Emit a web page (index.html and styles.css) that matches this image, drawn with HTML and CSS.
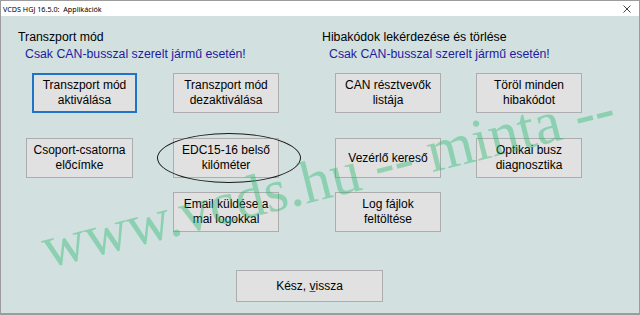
FILE: index.html
```html
<!DOCTYPE html>
<html lang="hu">
<head>
    <meta charset="UTF-8">
    <meta name="viewport" content="width=device-width, initial-scale=1.0">
    <title>VCDS HGJ 16.5.0: Applikációk</title>
    <link rel="stylesheet" href="styles.css">
</head>
<body>
    <div class="window">
        <div class="titlebar">
            <span class="title">VCDS HGJ 16.5.0:&nbsp; Applikációk</span>
            <svg class="close" width="8" height="8" viewBox="0 0 8 8">
                <path d="M0.5 0.5 L7.5 7.5 M7.5 0.5 L0.5 7.5" stroke="#444" stroke-width="1" fill="none"/>
            </svg>
        </div>

        <div class="client">
            <div class="headers">
                <div class="group">
                    <div class="heading">Transzport mód</div>
                    <div class="note">Csak CAN-busszal szerelt jármű esetén!</div>
                </div>
                <div class="group">
                    <div class="heading">Hibakódok lekérdezése és törlése</div>
                    <div class="note">Csak CAN-busszal szerelt jármű esetén!</div>
                </div>
            </div>

            <div class="grid">
                <button class="btn first-row focused c1">Transzport mód<br>aktiválása</button>
                <button class="btn first-row c2">Transzport mód<br>dezaktiválása</button>
                <button class="btn first-row c3">CAN résztvevők<br>listája</button>
                <button class="btn first-row c4">Töröl minden<br>hibakódot</button>

                <button class="btn wide c1">Csoport-csatorna<br>előcímke</button>
                <div class="marked c2">
                    <button class="btn">EDC15-16 belső<br>kilóméter</button>
                    <div class="ring"></div>
                </div>
                <button class="btn c3">Vezérlő kereső</button>
                <button class="btn c4">Optikai busz<br>diagnosztika</button>

                <button class="btn c2">Email küldése a<br>mai logokkal</button>
                <button class="btn c3">Log fájlok<br>feltöltése</button>
            </div>

            <div class="footer">
                <button class="btn done">Kész, <u>v</u>issza</button>
            </div>

            <div class="watermark">www.vcds.hu -- minta --</div>
        </div>
    </div>
</body>
</html>
```

FILE: styles.css
```css
body {
    margin: 0;
    padding: 0;
    font-family: "Liberation Sans", Arial, sans-serif;
    background-color: #ffffff;
}

.window {
    width: 640px;
    height: 315px;
    box-sizing: border-box;
    border: 1px solid #9c9c9c;
    border-bottom-width: 2px;
    background-color: #d2e0e0;
    overflow: hidden;
    display: flex;
    flex-direction: column;
}

.titlebar {
    height: 15px;
    background-color: #ffffff;
    display: flex;
    align-items: center;
    justify-content: space-between;
    padding: 0 8px 0 2px;
}

.title {
    font-family: "Noto Sans", sans-serif;
    font-size: 7.2px;
    color: #000;
}

.close {
    display: block;
}

.client {
    position: relative;
    flex: 1;
}

.headers {
    display: grid;
    grid-template-columns: 304px 1fr;
    padding: 14px 0 0 17px;
}

.heading {
    font-size: 12.3px;
    line-height: 15px;
    color: #000;
}

.note {
    font-size: 12.3px;
    line-height: 15px;
    color: #1c1ca0;
    margin-top: 2px;
    padding-left: 7px;
}

.grid {
    display: grid;
    grid-template-columns: 111px 142px 162px 141px;
    justify-items: end;
    row-gap: 14px;
    padding-left: 25px;
    margin-top: 11px;
}

.c1 { grid-column: 1; }
.c2 { grid-column: 2; }
.c3 { grid-column: 3; }
.c4 { grid-column: 4; }

.btn {
    width: 106px;
    height: 40px;
    padding: 0;
    background-color: #e1e1e1;
    border: 1px solid #adadad;
    font-family: "Liberation Sans", Arial, sans-serif;
    font-size: 12px;
    line-height: 15px;
    color: #000;
    cursor: pointer;
}

.first-row {
    margin-bottom: 11px;
}

.focused {
    border: 2px solid #1f74c8;
    width: 105px;
}

.wide {
    justify-self: start;
    width: 107px;
}

.marked {
    position: relative;
}

.marked .btn {
    display: block;
}

.ring {
    position: absolute;
    left: -16px;
    top: -5px;
    width: 144px;
    height: 50px;
    box-sizing: border-box;
    border: 1.5px solid #1a1a1a;
    border-radius: 50%;
    pointer-events: none;
}

.footer {
    padding-left: 235px;
    margin-top: 38px;
}

.done {
    width: 147px;
    height: 32px;
}

.done u {
    text-decoration-color: #555;
}

.watermark {
    position: absolute;
    left: 327px;
    top: 162px;
    transform: translate(-50%, -50%) rotate(-14deg);
    white-space: nowrap;
    font-family: "Liberation Serif", "Times New Roman", serif;
    font-size: 60px;
    color: rgba(40, 185, 110, 0.42);
    pointer-events: none;
}
```
